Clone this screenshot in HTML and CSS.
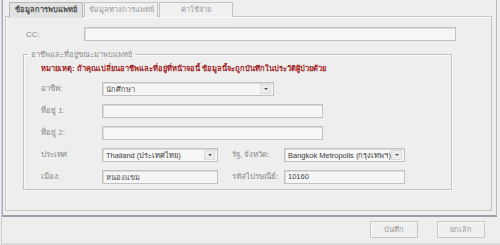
FILE: index.html
```html
<!DOCTYPE html>
<html lang="th">
<head>
<meta charset="utf-8">
<link rel="stylesheet" href="styles.css">
</head>
<body>
<div class="window">
  <div class="main">
    <div class="tabs">
      <div class="tab active">ข้อมูลการพบแพทย์</div>
      <div class="tab">ข้อมูลทางการแพทย์</div>
      <div class="tab">ค่าใช้จ่าย</div>
    </div>
    <div class="panel">
      <div class="cc-row">
        <span class="label cc-label">CC:</span>
        <div class="input cc-input"></div>
      </div>
      <fieldset class="group">
        <legend>อาชีพและที่อยู่ขณะมาพบแพทย์</legend>
        <div class="note">หมายเหตุ: ถ้าคุณเปลี่ยนอาชีพและที่อยู่ที่หน้าจอนี้ ข้อมูลนี้จะถูกบันทึกในประวัติผู้ป่วยด้วย</div>
        <div class="row">
          <span class="label">อาชีพ:</span>
          <div class="input select occ"><span>นักศึกษา</span><span class="arrow"></span></div>
        </div>
        <div class="row">
          <span class="label">ที่อยู่ 1:</span>
          <div class="input addr"></div>
        </div>
        <div class="row">
          <span class="label">ที่อยู่ 2:</span>
          <div class="input addr"></div>
        </div>
        <div class="row">
          <span class="label">ประเทศ</span>
          <div class="input select short"><span class="dark">Thailand (ประเทศไทย)</span><span class="arrow"></span></div>
          <span class="label label2">รัฐ, จังหวัด:</span>
          <div class="input select short2"><span class="dark">Bangkok Metropolis (กรุงเทพฯ)</span><span class="arrow"></span></div>
        </div>
        <div class="row">
          <span class="label">เมือง:</span>
          <div class="input short"><span>หนองแขม</span></div>
          <span class="label label2">รหัสไปรษณีย์:</span>
          <div class="input short2"><span class="dark">10160</span></div>
        </div>
      </fieldset>
    </div>
  </div>
  <div class="footer">
    <div class="btn">บันทึก</div>
    <div class="btn">ยกเลิก</div>
  </div>
</div>
</body>
</html>
```

FILE: styles.css
```css
* { box-sizing: border-box; }
html, body { margin: 0; padding: 0; }
body {
  width: 500px;
  height: 245px;
  background: #eeeeee;
  font-family: "Liberation Sans", "Noto Sans", sans-serif;
  font-size: 8px;
  color: #8a8a8a;
  overflow: hidden;
}
.window {
  height: 245px;
  display: flex;
  flex-direction: column;
  border-left: 1px solid #c8ccd6;
  margin-left: 1px;
}
.main {
  height: 217px;
  border-left: 1px solid #a8acbc;
  border-right: 1px solid #b4b8c4;
  border-bottom: 2px solid #9c9eae;
  margin-right: 3px;
  padding: 2px 4px 0 2px;
  display: flex;
  flex-direction: column;
}
.tabs {
  display: flex;
  padding-left: 4px;
  height: 15px;
  position: relative;
  z-index: 1;
}
.tab {
  width: 74px;
  height: 15px;
  margin-right: 1px;
  border: 1px solid #c4c4c4;
  border-bottom: none;
  background: #f0f0f0;
  color: #9a9a9a;
  text-align: center;
  line-height: 13px;
  font-size: 7.5px;
  white-space: nowrap;
}
.tab.active {
  background: #e2e2e2;
  color: #505050;
  font-weight: bold;
  border-color: #b8b8b8;
  height: 16px;
}
.panel {
  flex: 1;
  margin-top: -1px;
  margin-bottom: 4px;
  border: 1px solid #c6c6c6;
  box-shadow: inset 1px 1px 0 #fafafa;
  padding: 10px 0 0 17px;
}
.cc-row {
  display: flex;
  align-items: center;
  height: 14px;
}
.cc-label { width: 57px; padding-left: 3px; }
.input {
  height: 14px;
  background: #f6f6f6;
  border: 1px solid #c2c2c2;
  box-shadow: inset 1px 1px 0 #dcdcdc;
  display: flex;
  align-items: center;
  padding-left: 3px;
  color: #505050;
  font-size: 7.5px;
  white-space: nowrap;
  overflow: hidden;
}
.cc-input { width: 372px; }
.group {
  margin: 7px 0 0 0;
  width: 429px;
  height: 142px;
  border: 1px solid #c4c4c4;
  box-shadow: inset 1px 1px 0 #fafafa, 1px 1px 0 #fafafa;
  padding: 2px 0 0 17px;
}
.group legend {
  padding: 0 3px;
  margin-left: -13px;
  font-size: 7.5px;
  color: #8a8a8a;
}
.note {
  color: #a02424;
  font-weight: bold;
  font-size: 7.5px;
  height: 12px;
  margin-bottom: 1px;
  white-space: nowrap;
}
.row {
  display: flex;
  align-items: center;
  height: 15px;
  margin-top: 7px;
}
.label { width: 61px; display: inline-block; white-space: nowrap; }
.label2 { width: 52px; margin-left: 14px; }
.select { justify-content: space-between; padding-right: 2px; }
.arrow {
  flex: none;
  width: 11px;
  height: 10px;
  background: #ececec;
  border: 1px solid #dcdcdc;
  position: relative;
}
.arrow::after {
  content: "";
  position: absolute;
  left: 3px;
  top: 3px;
  border-left: 2px solid transparent;
  border-right: 2px solid transparent;
  border-top: 2px solid #505050;
}
.occ { width: 172px; }
.addr { width: 221px; }
.short { width: 116px; }
.short2 { width: 121px; }
.dark { color: #404040; }
.footer {
  flex: 1;
  display: flex;
  justify-content: flex-end;
  align-items: center;
  gap: 19px;
  padding-right: 15px;
  padding-bottom: 2px;
  border-bottom: 2px solid #dadada;
}
.btn {
  width: 48px;
  height: 17px;
  border: 1px solid #c8c8c8;
  background: #efefef;
  box-shadow: inset 1px 1px 0 #fafafa;
  text-align: center;
  line-height: 15px;
  color: #9a9a9a;
  font-size: 7.5px;
}
```
